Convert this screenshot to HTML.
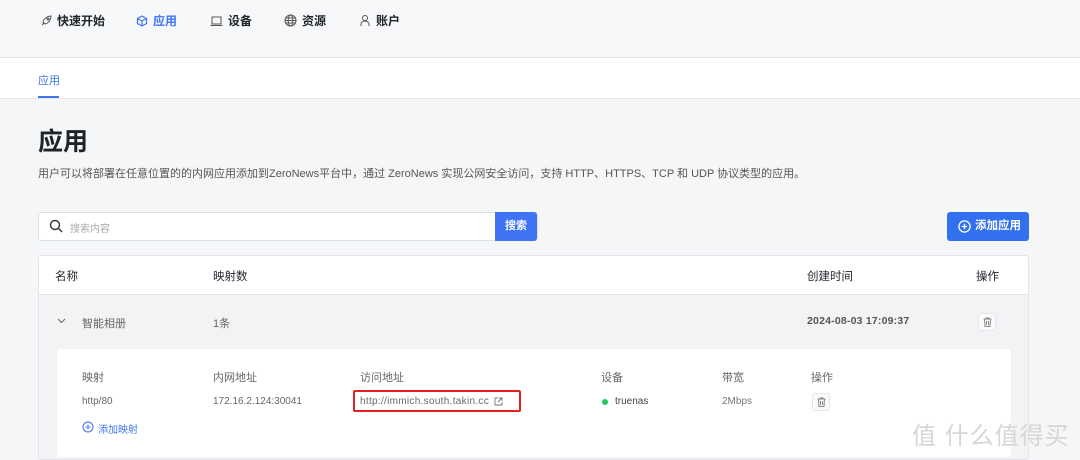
<!DOCTYPE html><html><head><meta charset="utf-8"><style>
*{margin:0;padding:0;box-sizing:border-box}
body{width:1080px;height:460px;overflow:hidden;background:#f5f6f8;font-family:"Liberation Sans","Noto Sans CJK SC",sans-serif;color:#1f2329;position:relative}
.a{position:absolute;white-space:nowrap}
.nav{position:absolute;left:0;top:0;width:1080px;height:58px;background:#f7f8fa;border-bottom:1px solid #e3e5e8}
.nav span{position:absolute;top:12px;font-size:12px;font-weight:bold;display:flex;align-items:center;gap:5px}
.tabs{position:absolute;left:0;top:58px;width:1080px;height:41px;background:#fff;border-bottom:1px solid #e3e5e8}
.g{color:#666;font-size:11px}
.trash{position:absolute;width:18px;height:18px;border:1px solid #e3e5e8;border-radius:3px;background:#f9fafb;display:flex;align-items:center;justify-content:center}
</style></head><body>
<div class="nav">
<span style="left:40px"><svg width="12" height="12" viewBox="0 0 12 12" fill="none" stroke="#555" stroke-width="1"><path d="M4 8L2 10M5 9c4-1 6-5 6-8-3 0-7 2-8 6z"/><circle cx="8" cy="4" r="1"/></svg>快速开始</span>
<span style="left:136px;color:#3f74f5"><svg width="12" height="12" viewBox="0 0 12 12" fill="none" stroke="#3f74f5" stroke-width="1.2"><path d="M6 1l4.5 2.5v5L6 11 1.5 8.5v-5zM1.5 3.5L6 6l4.5-2.5M6 6v5"/></svg>应用</span>
<span style="left:210px"><svg width="13" height="12" viewBox="0 0 13 12" fill="none" stroke="#555" stroke-width="1"><rect x="2" y="2" width="9" height="7"/><path d="M0.5 10.5h12"/></svg>设备</span>
<span style="left:284px"><svg width="13" height="13" viewBox="0 0 13 13" fill="none" stroke="#555" stroke-width="1"><circle cx="6.5" cy="6.5" r="5.5"/><ellipse cx="6.5" cy="6.5" rx="2.3" ry="5.5"/><path d="M1 6.5h11M2 4h9M2 9h9"/></svg>资源</span>
<span style="left:359px"><svg width="12" height="13" viewBox="0 0 12 13" fill="none" stroke="#555" stroke-width="1"><circle cx="6" cy="4" r="2.5"/><path d="M2 12V10a4 3 0 0 1 8 0v2"/></svg>账户</span>
</div>
<div class="tabs"><div class="a" style="left:38px;top:14px;font-size:11px;color:#3f74f5">应用</div><div class="a" style="left:38px;top:38px;width:21px;height:2px;background:#3f74f5"></div></div>
<div class="a" style="left:38px;top:122px;font-size:25px;font-weight:bold">应用</div>
<div class="a" style="left:38px;top:165px;font-size:11px;color:#555">用户可以将部署在任意位置的的内网应用添加到ZeroNews平台中，通过 ZeroNews 实现公网安全访问，支持 HTTP、HTTPS、TCP 和 UDP 协议类型的应用。</div>
<div class="a" style="left:38px;top:212px;width:500px;height:29px;background:#fff;border:1px solid #dcdfe4;border-radius:3px"></div>
<svg class="a" style="left:49px;top:219px" width="14" height="14" viewBox="0 0 14 14" fill="none" stroke="#333" stroke-width="1.4"><circle cx="6" cy="6" r="4.5"/><path d="M9.5 9.5L13 13"/></svg>
<div class="a" style="left:70px;top:220px;font-size:10px;color:#aaa">搜索内容</div>
<div class="a" style="left:495px;top:212px;width:42px;height:29px;background:#3f74f5;border-radius:0 3px 3px 0;color:#fff;font-size:11px;font-weight:bold;text-align:center;line-height:29px">搜索</div>
<div class="a" style="left:947px;top:212px;width:82px;height:29px;background:#3370f0;border-radius:3px;color:#fff;font-size:11.5px;font-weight:bold;line-height:29px;padding-left:28px">添加应用</div>
<svg class="a" style="left:958px;top:220px" width="13" height="13" viewBox="0 0 13 13" fill="none" stroke="#fff" stroke-width="1.3"><circle cx="6.5" cy="6.5" r="5.6"/><path d="M6.5 3.8v5.4M3.8 6.5h5.4"/></svg>
<div class="a" style="left:38px;top:255px;width:991px;height:205px;background:#f2f3f5;border:1px solid #e3e5e8;border-radius:3px"></div>
<div class="a" style="left:39px;top:256px;width:989px;height:39px;background:#fff;border-bottom:1px solid #e3e5e8"></div>
<div class="a" style="left:55px;top:268px;font-size:11.5px">名称</div>
<div class="a" style="left:213px;top:268px;font-size:11.5px">映射数</div>
<div class="a" style="left:807px;top:268px;font-size:11.5px">创建时间</div>
<div class="a" style="left:976px;top:268px;font-size:11.5px">操作</div>
<svg class="a" style="left:57px;top:318px" width="9" height="6" viewBox="0 0 9 6" fill="none" stroke="#666" stroke-width="1"><path d="M1 1l3.5 3.5L8 1"/></svg>
<div class="a g" style="left:82px;top:315px">智能相册</div>
<div class="a g" style="left:213px;top:315px">1条</div>
<div class="a" style="left:807px;top:315px;font-size:10.5px;color:#555;font-weight:bold;letter-spacing:0.2px">2024-08-03 17:09:37</div>
<div class="trash" style="left:978px;top:313px"><svg width="9" height="10" viewBox="0 0 9 10" fill="none" stroke="#888" stroke-width="1"><path d="M0.5 2h8M3 2V1h3v1M1.5 2l.5 7.5h5l.5-7.5M3.5 4v4M5.5 4v4"/></svg></div>
<div class="a" style="left:57px;top:349px;width:954px;height:108px;background:#fff;border-radius:3px"></div>
<div class="a g" style="left:82px;top:369px">映射</div>
<div class="a g" style="left:213px;top:369px">内网地址</div>
<div class="a g" style="left:360px;top:369px">访问地址</div>
<div class="a g" style="left:601px;top:369px">设备</div>
<div class="a g" style="left:722px;top:369px">带宽</div>
<div class="a g" style="left:811px;top:369px">操作</div>
<div class="a g" style="left:82px;top:396px;font-size:10px">http/80</div>
<div class="a g" style="left:213px;top:396px;font-size:10px">172.16.2.124:30041</div>
<div class="a g" style="left:360px;top:396px;font-size:10px;letter-spacing:0.3px">http://immich.south.takin.cc</div>
<svg class="a" style="left:494px;top:397px" width="9" height="9" viewBox="0 0 9 9" fill="none" stroke="#777" stroke-width="0.9"><path d="M4 1H1v7h7V5M5 1h3v3M8 1L4 5"/></svg>
<div class="a" style="left:353px;top:390px;width:168px;height:22px;border:2px solid #e52020;border-radius:2px"></div>
<div class="a" style="left:602px;top:399px;width:6px;height:6px;border-radius:50%;background:#22c55e"></div>
<div class="a" style="left:615px;top:396px;font-size:10px;color:#444">truenas</div>
<div class="a g" style="left:722px;top:396px;font-size:10px;color:#777">2Mbps</div>
<div class="trash" style="left:812px;top:393px"><svg width="9" height="10" viewBox="0 0 9 10" fill="none" stroke="#888" stroke-width="1"><path d="M0.5 2h8M3 2V1h3v1M1.5 2l.5 7.5h5l.5-7.5M3.5 4v4M5.5 4v4"/></svg></div>
<svg class="a" style="left:82px;top:421px" width="12" height="12" viewBox="0 0 12 12" fill="none" stroke="#3f74f5" stroke-width="1"><circle cx="6" cy="6" r="5"/><path d="M6 3.5v5M3.5 6h5"/></svg>
<div class="a" style="left:98px;top:421px;font-size:10px;color:#3f74f5">添加映射</div>
<div class="a" style="left:912px;top:416px;font-size:24px;color:#d6d6d6;letter-spacing:1px">值 什么值得买</div>
</body></html>
